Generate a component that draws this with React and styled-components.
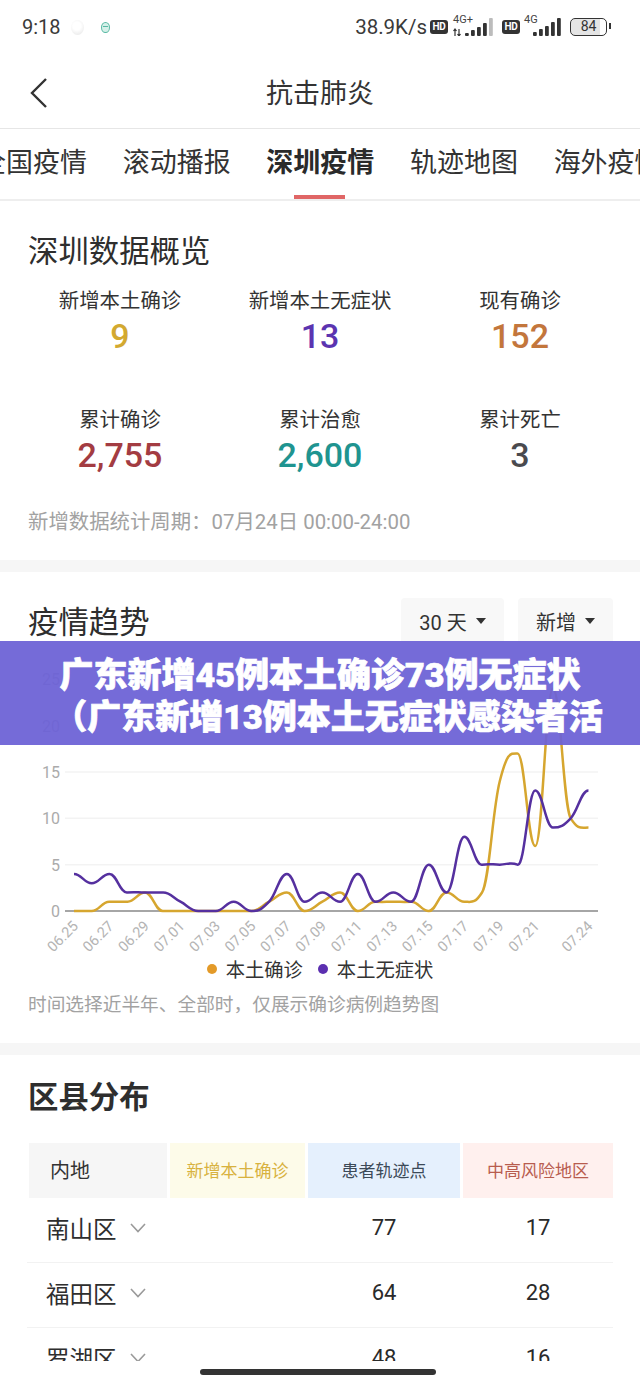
import React from "react";
import styled, {createGlobalStyle} from "styled-components";

const GlobalStyle = createGlobalStyle`
    html, body {
        margin: 0;
        padding: 0;
        background: #fff;
        font-family: Roboto, "Noto Sans CJK SC", sans-serif;
        color: #2b2b2b;
    }
`;

const Page = styled.div`
    position: relative;
    width: 640px;
    height: 1387px;
    overflow: hidden;
    display: flex;
    flex-direction: column;
    background: #fff;
`;

const Content = styled.div`
    height: 1361px;
    overflow: hidden;
    flex-shrink: 0;
`;

/* status bar */
const StatusBar = styled.div`
    height: 54px;
    display: flex;
    align-items: center;
    padding: 0 22px;
    font-size: 20px;
    color: #3a3a3a;
`;

const Time = styled.span`
    width: 46px;
`;

const Bubble = styled.span`
    width: 13px;
    height: 15px;
    border-radius: 50%;
    margin-left: 3px;
    background: radial-gradient(circle at 45% 40%, #fff 35%, #e2e2e2 100%);
`;

const TealDot = styled.span`
    position: relative;
    width: 9px;
    height: 11px;
    margin-left: 17px;
    border-radius: 50%;
    background: #d5f0e9;
    border: 1px solid #58b9a3;
    box-sizing: border-box;
    &::after {
        content: "";
        position: absolute;
        left: 1px;
        right: 1px;
        top: 3px;
        height: 1px;
        background: #58b9a3;
    }
`;

const StatusRight = styled.div`
    margin-left: auto;
    margin-right: 11px;
    display: flex;
    align-items: center;
`;

const Speed = styled.span`
    margin-right: 3px;
    font-size: 20.5px;
`;

const HdBadge = styled.span`
    width: 18px;
    height: 14px;
    border-radius: 3px;
    background: #333;
    color: #fff;
    font-size: 10px;
    font-weight: 700;
    line-height: 14px;
    text-align: center;
    letter-spacing: -0.3px;
`;

const SignalWrap = styled.span`
    position: relative;
    display: block;
    width: ${(p) => p.$w}px;
    height: 20px;
    margin-left: ${(p) => p.$ml}px;
    margin-right: ${(p) => p.$mr}px;
`;

const NetLabel = styled.span`
    position: absolute;
    left: 0;
    top: -3px;
    font-size: 11px;
    line-height: 12px;
    color: #444;
`;

const Battery = styled.span`
    position: relative;
    width: 37px;
    height: 18px;
    box-sizing: border-box;
    border: 1.5px solid #333;
    border-radius: 5px;
    font-size: 14px;
    line-height: 15px;
    text-align: center;
    color: #333;
    background: linear-gradient(90deg, #e4e4e4 84%, #fff 84%);
    &::after {
        content: "";
        position: absolute;
        right: -5px;
        top: 4px;
        width: 2px;
        height: 6px;
        background: #333;
    }
`;

/* title + tabs */
const Header = styled.div`
    height: 74px;
    position: relative;
    display: flex;
    align-items: center;
    justify-content: center;
    border-bottom: 1px solid #e6e6e6;
    font-size: 27px;
    color: #333;
`;

const BackIcon = styled.svg`
    position: absolute;
    left: 29px;
    top: 23px;
`;

const Tabs = styled.div`
    height: 70px;
    display: flex;
    gap: 35.67px;
    margin-left: -21px;
    overflow: hidden;
    border-bottom: 2px solid #eeeeee;
`;

const Tab = styled.div`
    position: relative;
    flex-shrink: 0;
    width: 108px;
    font-size: 27px;
    line-height: 68px;
    white-space: nowrap;
    font-weight: ${(p) => (p.$active ? 700 : 400)};
    color: ${(p) => (p.$active ? "#2a2a2a" : "#333")};
    ${(p) =>
        p.$active &&
        `&::after {
            content: "";
            position: absolute;
            left: 28px;
            bottom: 0;
            width: 51px;
            height: 4px;
            background: #e06666;
        }`}
`;

/* sections */
const Section = styled.section`
    padding: ${(p) => p.$top}px 28px ${(p) => p.$bottom}px;
    border-bottom: ${(p) => (p.$band ? "12px solid #f6f6f6" : "none")};
`;

const SectionHead = styled.div`
    display: flex;
    align-items: center;
    justify-content: space-between;
`;

const SectionTitle = styled.h2`
    margin: 0;
    font-size: 30.4px;
    line-height: 40px;
    font-weight: ${(p) => (p.$bold ? 700 : 400)};
    color: #2e2e2e;
`;

const StatGrid = styled.div`
    display: grid;
    grid-template-columns: repeat(3, 200px);
    row-gap: 48px;
    margin: 15px -8px 31px;
`;

const Stat = styled.div`
    text-align: center;
`;

const StatLabel = styled.div`
    font-size: 20.4px;
    line-height: 28px;
    color: #333;
`;

const StatValue = styled.div`
    font-size: 34px;
    line-height: 43px;
    font-weight: 500;
    color: ${(p) => p.$color};
`;

const Note = styled.div`
    font-size: ${(p) => p.$size}px;
    line-height: 28px;
    color: #a2a2a2;
    white-space: nowrap;
`;

const Selects = styled.div`
    display: flex;
    gap: 14px;
    margin-right: -1px;
    margin-top: -4px;
`;

const Select = styled.div`
    width: ${(p) => p.$w}px;
    height: 46px;
    border-radius: 4px;
    background: #f8f8f8;
    display: flex;
    align-items: center;
    justify-content: center;
    gap: 9px;
    font-size: 20px;
    color: #333;
    &::after {
        content: "";
        border-left: 5px solid transparent;
        border-right: 5px solid transparent;
        border-top: 6px solid #333;
    }
`;

const ChartSvg = styled.svg`
    display: block;
    margin: 6px -28px 0;
`;

const Legend = styled.div`
    display: flex;
    justify-content: center;
    align-items: center;
    height: 28px;
    margin: -5px 0 8px;
    font-size: 19.3px;
    color: #333;
`;

const Dot = styled.span`
    width: 10px;
    height: 10px;
    border-radius: 50%;
    margin-right: 9px;
    margin-left: ${(p) => p.$ml}px;
    background: ${(p) => p.$color};
`;

/* table */
const Table = styled.div`
    margin: 25px -1px 0 0;
`;

const HeadRow = styled.div`
    display: grid;
    grid-template-columns: 138px 135px 152px 150px;
    column-gap: 3px;
    height: 55px;
    margin-left: 1px;
`;

const HeadCell = styled.div`
    background: ${(p) => p.$bg};
    color: ${(p) => p.$color};
    font-size: ${(p) => p.$size}px;
    display: flex;
    align-items: center;
    justify-content: ${(p) => (p.$left ? "flex-start" : "center")};
    padding-left: ${(p) => (p.$left ? "21px" : "0")};
    padding-bottom: 2px;
`;

const Row = styled.div`
    display: grid;
    grid-template-columns: 139px 135px 152px 150px;
    column-gap: 3px;
    height: 64px;
    align-items: center;
    margin-left: -1px;
    border-bottom: 1px solid #f2f2f2;
`;

const District = styled.div`
    display: flex;
    align-items: center;
    gap: 13px;
    padding-left: 19px;
    font-size: 23.5px;
    color: #2e2e2e;
    margin-top: -5px;
`;

const Num = styled.div`
    grid-column: ${(p) => p.$col};
    text-align: center;
    font-size: 22px;
    color: #2a2a2a;
    margin-top: -5px;
    padding-left: 2px;
`;

/* overlay banner */
const Banner = styled.div`
    position: absolute;
    left: 0;
    top: 641px;
    width: 640px;
    height: 104px;
    box-sizing: border-box;
    padding-top: 13px;
    background: rgba(108, 98, 214, 0.94);
    color: #fff;
    font-size: 34px;
    line-height: 42px;
    font-weight: 900;
    text-align: center;
    white-space: nowrap;
    -webkit-text-stroke: 0.7px #fff;
`;

const BannerLine = styled.div`
    padding-left: ${(p) => p.$indent || 0}px;
`;

const Footer = styled.div`
    flex: 1;
    display: flex;
    justify-content: center;
    padding-top: 8px;
`;

const HomeBar = styled.div`
    width: 236px;
    height: 6px;
    margin-right: 4px;
    border-radius: 3px;
    background: #333;
`;

const SignalSvg = styled.svg`
    position: absolute;
    left: 0;
    bottom: 1px;
`;

const Bars = ({width, offset, levels, arrows}) => (
    <SignalSvg width={width} height="18" viewBox={`0 0 ${width} 18`}>
        {arrows && <path d="M2 18 V11 M0.5 13 L2 11 L3.5 13 M6 11 V18 M4.5 16 L6 18 L7.5 16" fill="none" stroke="#333" strokeWidth="1.2" />}
        {levels.map((h, i) => (
            <rect key={i} x={offset + i * 6} y={18 - h} width="3.8" height={h} rx="1" fill={arrows && i === levels.length - 1 ? "#bcbcbc" : "#333"} />
        ))}
    </SignalSvg>
);

const Chevron = () => (
    <svg width="16" height="12" viewBox="0 0 16 12" fill="none" stroke="#9a9a9a" strokeWidth="1.6">
        <path d="M1 2 L8 9.5 L15 2" />
    </svg>
);

// chart data, 06.25 - 07.24
const local = [0, 0, 1, 1, 2, 0, 0, 0, 0, 0, 0, 1, 2, 0, 1, 2, 0, 1, 1, 1, 0, 2, 1, 2, 14, 17, 7, 24, 10, 9];
const free = [4, 3, 4, 2, 2, 2, 1, 0, 0, 1, 0, 1, 4, 1, 2, 1, 4, 1, 2, 1, 5, 2, 8, 5, 5, 5, 13, 9, 10, 13];
const dates = ["06.25", "06.27", "06.29", "07.01", "07.03", "07.05", "07.07", "07.09", "07.11", "07.13", "07.15", "07.17", "07.19", "07.21"];

const X0 = 74;
const STEP = 17.74;
const Y0 = 261;
const UNIT = 9.27;
const px = (i) => X0 + i * STEP;
const py = (v) => Y0 - v * UNIT;

// rounded spline: flat on peaks, slight wobble on plateaus, limited slope on the slopes
function smoothPath(values) {
    const pts = values.map((v, i) => [px(i), py(v)]);
    const slopes = pts.map((p, i) => {
        if (i === 0 || i === pts.length - 1) return 0;
        const a = (p[1] - pts[i - 1][1]) / STEP;
        const b = (pts[i + 1][1] - p[1]) / STEP;
        if (a * b < 0) return 0;
        if (a * b === 0) return p[1] === Y0 ? 0 : -0.1 * (a + b);
        const size = Math.min((Math.abs(a) + Math.abs(b)) / 2, 3 * Math.min(Math.abs(a), Math.abs(b)));
        return Math.sign(a) * size;
    });
    const h = STEP * 0.42;
    let d = `M${pts[0][0]} ${pts[0][1]}`;
    for (let i = 1; i < pts.length; i++) {
        d += ` C${pts[i - 1][0] + h} ${pts[i - 1][1] + slopes[i - 1] * h} ${pts[i][0] - h} ${pts[i][1] - slopes[i] * h} ${pts[i][0]} ${pts[i][1]}`;
    }
    return d;
}

const TrendChart = () => (
    <ChartSvg width="640" height="310" viewBox="0 0 640 310">
        {[5, 10, 15, 20, 25].map((v) => (
            <line key={v} x1="65" x2="598" y1={py(v)} y2={py(v)} stroke="#f3f3f3" strokeWidth="1.5" />
        ))}
        <line x1="65" x2="598" y1={Y0} y2={Y0} stroke="#a6a6a6" strokeWidth="2" />
        {[0, 5, 10, 15, 20, 25].map((v) => (
            <text key={v} x="60" y={py(v) + 6} textAnchor="end" fontSize="16" fill="#ababab">
                {v}
            </text>
        ))}
        {dates.map((d, i) => (
            <text key={d} x={0} y={0} textAnchor="end" fontSize="14.5" fill="#b4b4b4" transform={`translate(${px(i * 2) + 5} ${Y0 + 16}) rotate(-45)`}>
                {d}
            </text>
        ))}
        <text x={0} y={0} textAnchor="end" fontSize="14.5" fill="#b4b4b4" transform={`translate(${px(29) + 5} ${Y0 + 16}) rotate(-45)`}>
            07.24
        </text>
        <path d={smoothPath(local)} fill="none" stroke="#d6a62f" strokeWidth="2.5" />
        <path d={smoothPath(free)} fill="none" stroke="#55309f" strokeWidth="2.5" />
    </ChartSvg>
);

const stats = [
    {label: "新增本土确诊", value: "9", color: "#d3a930"},
    {label: "新增本土无症状", value: "13", color: "#5b34b0"},
    {label: "现有确诊", value: "152", color: "#c3763c"},
    {label: "累计确诊", value: "2,755", color: "#a33c42"},
    {label: "累计治愈", value: "2,600", color: "#1f9490"},
    {label: "累计死亡", value: "3", color: "#4a4a4e"},
];

const districts = [
    {name: "南山区", spots: 77, risk: 17},
    {name: "福田区", spots: 64, risk: 28},
    {name: "罗湖区", spots: 48, risk: 16},
];

const App = () => (
    <Page>
        <GlobalStyle />
        <Content>
            <StatusBar>
                <Time>9:18</Time>
                <Bubble />
                <TealDot />
                <StatusRight>
                    <Speed>38.9K/s</Speed>
                    <HdBadge>HD</HdBadge>
                    <SignalWrap $w={41} $ml={5} $mr={8}>
                        <NetLabel>4G+</NetLabel>
                        <Bars width={41} offset={12} levels={[3, 6, 9, 13, 18]} arrows />
                    </SignalWrap>
                    <HdBadge>HD</HdBadge>
                    <SignalWrap $w={37} $ml={4} $mr={9}>
                        <NetLabel>4G</NetLabel>
                        <Bars width={37} offset={9} levels={[4, 7, 10, 14, 18]} />
                    </SignalWrap>
                    <Battery>84</Battery>
                </StatusRight>
            </StatusBar>
            <Header>
                <BackIcon width="20" height="32" viewBox="0 0 20 32" fill="none" stroke="#333" strokeWidth="2.4">
                    <path d="M17 2 L3 16 L17 30" />
                </BackIcon>
                抗击肺炎
            </Header>
            <Tabs>
                <Tab>全国疫情</Tab>
                <Tab>滚动播报</Tab>
                <Tab $active>深圳疫情</Tab>
                <Tab>轨迹地图</Tab>
                <Tab>海外疫情</Tab>
            </Tabs>
            <Section $top={31} $bottom={24} $band>
                <SectionTitle>深圳数据概览</SectionTitle>
                <StatGrid>
                    {stats.map((s) => (
                        <Stat key={s.label}>
                            <StatLabel>{s.label}</StatLabel>
                            <StatValue $color={s.color}>{s.value}</StatValue>
                        </Stat>
                    ))}
                </StatGrid>
                <Note $size={20.4}>新增数据统计周期：07月24日 00:00-24:00</Note>
            </Section>
            <Section $top={30} $bottom={24} $band>
                <SectionHead>
                    <SectionTitle>疫情趋势</SectionTitle>
                    <Selects>
                        <Select $w={103}>30 天</Select>
                        <Select $w={95}>新增</Select>
                    </Selects>
                </SectionHead>
                <TrendChart />
                <Legend>
                    <Dot $color="#e39a28" />
                    本土确诊
                    <Dot $color="#5b2fb0" $ml={15} />
                    本土无症状
                </Legend>
                <Note $size={18.7}>时间选择近半年、全部时，仅展示确诊病例趋势图</Note>
            </Section>
            <Section $top={23} $bottom={0}>
                <SectionTitle $bold>区县分布</SectionTitle>
                <Table>
                    <HeadRow>
                        <HeadCell $bg="#f6f6f6" $color="#333" $size={20} $left>
                            内地
                        </HeadCell>
                        <HeadCell $bg="#fdfbe9" $color="#d8b23f" $size={17}>
                            新增本土确诊
                        </HeadCell>
                        <HeadCell $bg="#e5f0fd" $color="#3c4a58" $size={17}>
                            患者轨迹点
                        </HeadCell>
                        <HeadCell $bg="#fff0ee" $color="#b85c4e" $size={17}>
                            中高风险地区
                        </HeadCell>
                    </HeadRow>
                    {districts.map((d) => (
                        <Row key={d.name}>
                            <District>
                                {d.name}
                                <Chevron />
                            </District>
                            <Num $col={3}>{d.spots}</Num>
                            <Num $col={4}>{d.risk}</Num>
                        </Row>
                    ))}
                </Table>
            </Section>
        </Content>
        <Footer>
            <HomeBar />
        </Footer>
        <Banner>
            <BannerLine>广东新增45例本土确诊73例无症状</BannerLine>
            <BannerLine $indent={16}>（广东新增13例本土无症状感染者活</BannerLine>
        </Banner>
    </Page>
);

export default App;
